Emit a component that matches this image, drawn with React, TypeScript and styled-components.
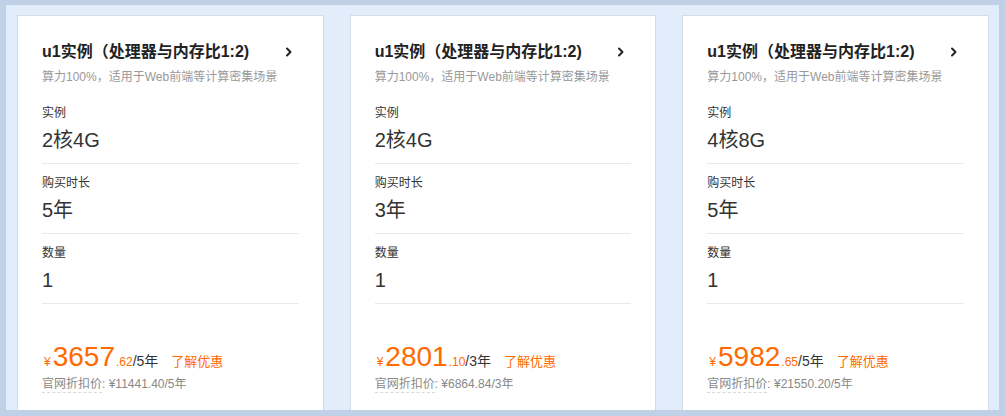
import React, { FunctionComponent } from "react";
import styled, { createGlobalStyle } from "styled-components";

const GlobalStyle = createGlobalStyle`
  html, body {
    margin: 0;
    padding: 0;
    background: #ffffff;
  }
  body {
    font-family: "Liberation Sans", "Noto Sans CJK SC", Arial, sans-serif;
    color: #333333;
  }
  * {
    box-sizing: border-box;
  }
`;

interface Plan {
  spec: string;
  duration: string;
  count: string;
  price: string;
  cents: string;
  unit: string;
  original: string;
}

const plans: Plan[] = [
  {
    spec: "2核4G",
    duration: "5年",
    count: "1",
    price: "3657",
    cents: ".62",
    unit: "/5年",
    original: "¥11441.40/5年",
  },
  {
    spec: "2核4G",
    duration: "3年",
    count: "1",
    price: "2801",
    cents: ".10",
    unit: "/3年",
    original: "¥6864.84/3年",
  },
  {
    spec: "4核8G",
    duration: "5年",
    count: "1",
    price: "5982",
    cents: ".65",
    unit: "/5年",
    original: "¥21550.20/5年",
  },
];

const Chevron = () => (
  <svg width="16" height="16" viewBox="0 0 16 16" fill="none">
    <path
      d="M6 4.5L9.5 8L6 11.5"
      stroke="#222"
      strokeWidth="2"
      strokeLinecap="round"
      strokeLinejoin="round"
    />
  </svg>
);

const PlanCard: FunctionComponent<{ plan: Plan }> = ({ plan }) => (
  <Card>
    <TitleRow>
      <Title>u1实例（处理器与内存比1:2)</Title>
      <Chevron />
    </TitleRow>
    <Subtitle>算力100%，适用于Web前端等计算密集场景</Subtitle>
    <Fields>
      <Field>
        <Label>实例</Label>
        <Value>{plan.spec}</Value>
      </Field>
      <Field>
        <Label>购买时长</Label>
        <Value>{plan.duration}</Value>
      </Field>
      <Field>
        <Label>数量</Label>
        <Value>{plan.count}</Value>
      </Field>
    </Fields>
    <PriceRow>
      <Currency>¥</Currency>
      <Amount>{plan.price}</Amount>
      <Cents>{plan.cents}</Cents>
      <Unit>{plan.unit}</Unit>
      <Promo>了解优惠</Promo>
    </PriceRow>
    <Original>
      <Dotted>官网折扣价</Dotted>: {plan.original}
    </Original>
  </Card>
);

const App = () => (
  <>
    <GlobalStyle />
    <Frame>
      <Grid>
        {plans.map((p, i) => (
          <PlanCard key={i} plan={p} />
        ))}
      </Grid>
    </Frame>
  </>
);

export default App;

const Frame = styled.div`
  width: 1005px;
  height: 416px;
  border-style: solid;
  border-color: #bfd0e7;
  border-width: 5px 6px 6px 6px;
  background: #e2edfc;
  overflow: hidden;
`;

const Grid = styled.div`
  display: grid;
  grid-template-columns: repeat(3, 1fr);
  gap: 26px;
  padding: 10px 10px 0 11px;
  height: 100%;
`;

const Card = styled.div`
  background: #ffffff;
  border: 1px solid #d6dce6;
  height: 440px;
  padding: 24px 24px 0 24px;
`;

const TitleRow = styled.div`
  display: flex;
  align-items: center;
  justify-content: space-between;
  height: 24px;
  padding-right: 2px;
`;

const Title = styled.h3`
  margin: 0;
  font-size: 16px;
  font-weight: bold;
  line-height: 24px;
  color: #222222;
`;

const Subtitle = styled.p`
  margin: 4px 0 0;
  font-size: 12px;
  line-height: 18px;
  color: #999999;
`;

const Fields = styled.div`
  margin-top: 8px;
`;

const Field = styled.div`
  padding: 10px 0 10px;
  border-bottom: 1px solid #e8e9ec;
`;

const Label = styled.div`
  font-size: 12px;
  line-height: 18px;
  color: #333333;
`;

const Value = styled.div`
  margin-top: 5px;
  font-size: 20px;
  line-height: 26px;
  color: #333333;
`;

const PriceRow = styled.div`
  display: flex;
  align-items: baseline;
  margin-top: 37px;
  height: 32px;
  line-height: 32px;
  color: #ff6a00;
`;

const Currency = styled.span`
  font-size: 12px;
  margin: 0 2px 0 2px;
`;

const Amount = styled.span`
  font-size: 28px;
`;

const Cents = styled.span`
  font-size: 12px;
  margin-left: 1px;
`;

const Unit = styled.span`
  font-size: 14px;
  color: #333333;
`;

const Promo = styled.span`
  font-size: 13px;
  margin-left: 13px;
`;

const Original = styled.div`
  margin-top: 2px;
  font-size: 12px;
  line-height: 18px;
  color: #888888;
`;

const Dotted = styled.span`
  display: inline-block;
  line-height: 16px;
  border-bottom: 1px dashed #d8d8d8;
`;
